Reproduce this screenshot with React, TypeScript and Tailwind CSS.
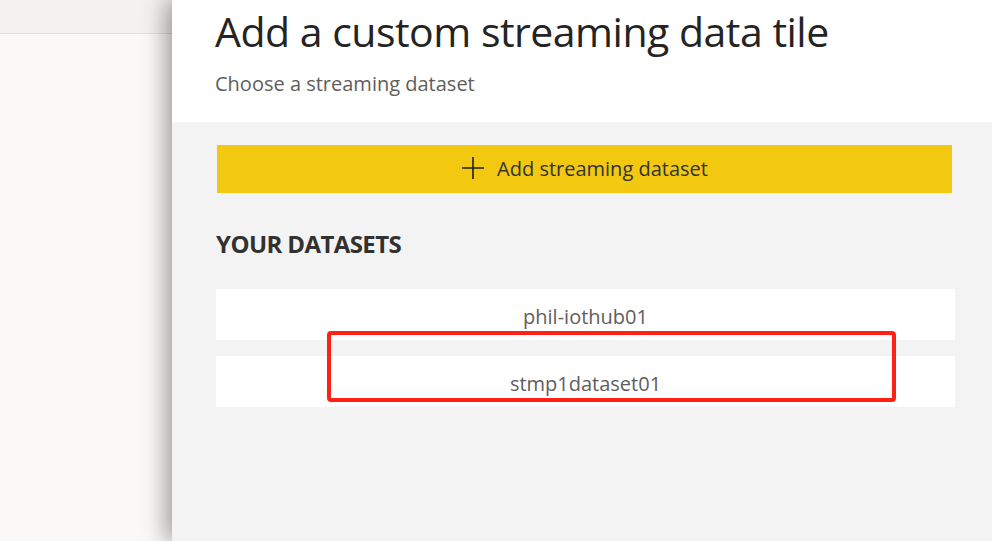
export default function App() {
  const datasets = ["phil-iothub01", "stmp1dataset01"];

  return (
    <div
      className="flex w-[992px] h-[541px] overflow-hidden bg-[#faf9f8]"
      style={{ fontFamily: '"Open Sans", "Noto Sans", sans-serif' }}
    >
      {/* page behind the panel */}
      <div className="w-[172px] shrink-0 flex flex-col">
        <div className="h-[34px] bg-[#f3f2f1] border-b border-[#e1dfdd]" />
        <div className="flex-1 bg-[#faf9f8]" />
      </div>

      {/* side panel */}
      <div className="relative z-10 flex-1 flex flex-col bg-[#f3f3f3] shadow-[-6px_0_22px_rgba(0,0,0,0.38)]">
        <div className="h-[122px] bg-white pl-[43px] pt-[3px]">
          <h1 className="text-[41px] leading-[56px] text-[#252423] tracking-[-0.5px]">
            Add a custom streaming data tile
          </h1>
          <p className="mt-[12px] text-[20px] leading-[26px] text-[#605e5c]">
            Choose a streaming dataset
          </p>
        </div>

        <div className="relative flex-1 pl-[45px] pr-[36px] pt-[23px]">
          <button className="flex items-center justify-center gap-[12px] w-[735px] h-[48px] bg-[#f2c811] text-[20px] text-[#333333]">
            <svg width="24" height="24" viewBox="0 0 24 24" className="shrink-0 -mt-[2px]">
              <path d="M12 1v22M1 12h22" stroke="#1f1f1f" strokeWidth="1.6" fill="none" />
            </svg>
            <span>Add streaming dataset</span>
          </button>

          <h2 className="mt-[37px] text-[24px] leading-[28px] font-bold text-[#323130] tracking-[-0.6px] -ml-px">
            YOUR DATASETS
          </h2>

          <div className="mt-[31px] flex flex-col gap-[16px] w-[739px] -ml-px">
            {datasets.map((name) => (
              <div
                key={name}
                className="h-[51px] bg-white flex items-center justify-center pt-[4px] text-[20px] text-[#605e5c]"
              >
                {name}
              </div>
            ))}
          </div>

          {/* red highlight annotation */}
          <div className="absolute left-[155px] top-[209px] w-[569px] h-[71px] border-[4px] border-[#ff2116] rounded-[4px]" />
        </div>
      </div>
    </div>
  );
}
